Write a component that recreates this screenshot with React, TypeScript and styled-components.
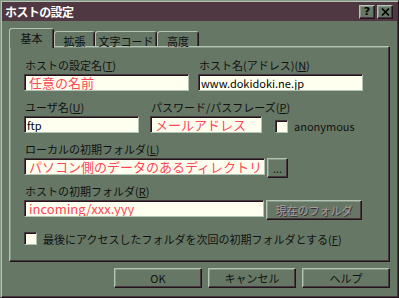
import * as React from "react";
import styled, { createGlobalStyle, css } from "styled-components";

// 色 (Win95 風のテーマ)
const C = {
  face: "#667766",
  light: "#b4c4b4",
  hi: "#889888",
  dark: "#22141a",
  shadow: "#46363e",
  ivory: "#fffff0",
  red: "#ff4656",
  title: "#4f3842",
};

const raised = css`
  border: 1px solid;
  border-color: ${C.light} ${C.dark} ${C.dark} ${C.light};
  box-shadow: inset -1px -1px ${C.shadow}, inset 1px 1px ${C.hi};
`;

const sunken = css`
  border: 1px solid;
  border-color: ${C.shadow} ${C.light} ${C.light} ${C.shadow};
  box-shadow: inset 1px 1px ${C.dark};
`;

const GlobalStyle = createGlobalStyle`
  html, body {
    margin: 0;
    padding: 0;
    background: ${C.face};
  }
  body {
    font-family: "Noto Sans CJK JP", "Noto Sans", sans-serif;
    font-size: 11px;
    color: #111;
  }
`;

const Window = styled.div`
  width: 399px;
  height: 298px;
  box-sizing: border-box;
  background: ${C.face};
  border: 1px solid;
  border-color: ${C.hi} ${C.dark} ${C.dark} ${C.hi};
  box-shadow: inset 1px 1px ${C.light}, inset -1px -1px ${C.shadow};
  display: flex;
  flex-direction: column;
`;

const TitleBar = styled.div`
  margin: 1px 1px 0 1px;
  height: 19px;
  background: ${C.title};
  display: flex;
  align-items: center;
  justify-content: space-between;
  padding: 0 4px 0 3px;
`;

const Title = styled.span`
  color: #fff;
  font-size: 12px;
  font-weight: 700;
  letter-spacing: -0.6px;
  line-height: 14px;
`;

const CapButtons = styled.div`
  display: flex;
  gap: 2px;
`;

const CapButton = styled.div`
  width: 16px;
  height: 14px;
  box-sizing: border-box;
  ${raised};
  background: ${C.face};
  display: flex;
  align-items: center;
  justify-content: center;
  font-family: "DejaVu Sans", sans-serif;
  font-weight: 700;
  font-size: 11px;
  line-height: 12px;
  color: #000;
`;

const Body = styled.div`
  flex: 1;
  padding: 7px 8px 0 8px;
  display: flex;
  flex-direction: column;
`;

const Tabs = styled.div`
  display: flex;
  align-items: flex-end;
  height: 18px;
`;

const Tab = styled.div<{ $active?: boolean; $w: number }>`
  width: ${(p) => p.$w}px;
  height: ${(p) => (p.$active ? 20 : 15)}px;
  margin-bottom: ${(p) => (p.$active ? -2 : 0)}px;
  box-sizing: border-box;
  background: ${C.face};
  border: 1px solid;
  border-bottom: none;
  border-color: ${C.light} ${C.dark} transparent ${C.light};
  border-radius: 3px 3px 0 0;
  box-shadow: inset -1px 0 ${C.shadow};
  display: flex;
  justify-content: center;
  padding-top: 2px;
  font-size: 11px;
  line-height: 14px;
  white-space: nowrap;
  position: relative;
  z-index: ${(p) => (p.$active ? 1 : 0)};
`;

const Panel = styled.div`
  height: 216px;
  box-sizing: border-box;
  ${raised};
  padding: 11px 14px 0 14px;
  display: flex;
  flex-direction: column;
`;

const Row = styled.div<{ $top?: number }>`
  display: flex;
  align-items: flex-start;
  margin-top: ${(p) => p.$top ?? 0}px;
`;

const Field = styled.div<{ $w: number; $left?: number }>`
  width: ${(p) => p.$w}px;
  display: flex;
  flex-direction: column;
  gap: 2px;
  flex: none;
  margin-left: ${(p) => p.$left ?? 0}px;
`;

const Label = styled.span`
  height: 14px;
  line-height: 14px;
  font-size: 11px;
  padding-left: 1px;
  white-space: nowrap;

  u {
    text-decoration: underline;
    text-underline-offset: 1px;
  }
`;

const TextBox = styled.input<{ $w?: number; $sample?: boolean }>`
  width: ${(p) => (p.$w ? `${p.$w}px` : "100%")};
  height: 17px;
  box-sizing: border-box;
  margin: 0;
  padding: 0 0 0 ${(p) => (p.$sample ? 4 : 2)}px;
  ${sunken};
  background: ${C.ivory};
  outline: none;
  font-family: "Noto Sans CJK JP", "Noto Sans", sans-serif;
  font-size: ${(p) => (p.$sample ? 13 : 11)}px;
  font-weight: 400;
  color: ${(p) => (p.$sample ? C.red : "#000")};
  line-height: 15px;
`;

const InputLine = styled.div`
  display: flex;
  align-items: flex-start;
  gap: 2px;
`;

const Button = styled.button<{ $w: number; $disabled?: boolean }>`
  width: ${(p) => p.$w}px;
  height: 20px;
  flex: none;
  box-sizing: border-box;
  margin: 0;
  padding: 0;
  ${raised};
  background: ${C.face};
  font-family: "Noto Sans CJK JP", "Noto Sans", sans-serif;
  font-size: 11px;
  line-height: 14px;
  color: ${(p) => (p.$disabled ? "#a89c9e" : "#111")};
  text-shadow: ${(p) => (p.$disabled ? `1px 1px 0 #3c2e34` : "none")};
`;

const Check = styled.span<{ $top?: number; $left?: number }>`
  width: 13px;
  height: 13px;
  box-sizing: border-box;
  ${sunken};
  background: ${C.ivory};
  flex: none;
  margin-top: ${(p) => p.$top ?? 0}px;
  margin-left: ${(p) => p.$left ?? 0}px;
`;

const CheckLabel = styled.span<{ $top?: number }>`
  margin-left: 6px;
  margin-top: ${(p) => p.$top ?? 0}px;
  font-size: 11px;
  line-height: 14px;
  white-space: nowrap;
`;

const Footer = styled.div`
  display: flex;
  justify-content: flex-end;
  gap: 6px;
  margin-top: 6px;
`;

const CloseIcon = () => (
  <svg width="9" height="8" viewBox="0 0 9 8">
    <path d="M1 0.5 L8 7.5 M8 0.5 L1 7.5" stroke="#000" strokeWidth="1.6" />
  </svg>
);

export default function App() {
  return (
    <>
      <GlobalStyle />
      <Window>
        <TitleBar>
          <Title>ホストの設定</Title>
          <CapButtons>
            <CapButton>?</CapButton>
            <CapButton>
              <CloseIcon />
            </CapButton>
          </CapButtons>
        </TitleBar>
        <Body>
          <Tabs>
            <Tab $active $w={45}>基本</Tab>
            <Tab $w={41}>拡張</Tab>
            <Tab $w={62}>文字コード</Tab>
            <Tab $w={42}>高度</Tab>
          </Tabs>
          <Panel>
            <Row>
              <Field $w={165}>
                <Label>
                  ホストの設定名(<u>T</u>)
                </Label>
                <TextBox $sample readOnly value="任意の名前" />
              </Field>
              <Field $w={165} $left={9}>
                <Label>
                  ホスト名(アドレス)(<u>N</u>)
                </Label>
                <TextBox readOnly value="www.dokidoki.ne.jp" />
              </Field>
            </Row>
            <Row $top={9}>
              <Field $w={115}>
                <Label>
                  ユーザ名(<u>U</u>)
                </Label>
                <TextBox readOnly value="ftp" />
              </Field>
              <Field $w={112} $left={11}>
                <Label>
                  パスワード/パスフレーズ(<u>P</u>)
                </Label>
                <TextBox $sample readOnly value="メールアドレス" />
              </Field>
              <Check $top={20} $left={13} />
              <CheckLabel $top={19}>anonymous</CheckLabel>
            </Row>
            <Row $top={9}>
              <Field $w={264}>
                <Label>
                  ローカルの初期フォルダ(<u>L</u>)
                </Label>
                <InputLine>
                  <TextBox
                    $w={241}
                    $sample
                    readOnly
                    value="パソコン側のデータのあるディレクトリ"
                  />
                  <Button $w={21}>...</Button>
                </InputLine>
              </Field>
            </Row>
            <Row $top={6}>
              <Field $w={338}>
                <Label>
                  ホストの初期フォルダ(<u>R</u>)
                </Label>
                <InputLine>
                  <TextBox $w={240} $sample readOnly value="incoming/xxx.yyy" />
                  <Button $w={96} $disabled>
                    現在のフォルダ
                  </Button>
                </InputLine>
              </Field>
            </Row>
            <Row $top={12}>
              <Check />
              <CheckLabel>
                最後にアクセスしたフォルダを次回の初期フォルダとする(<u>F</u>)
              </CheckLabel>
            </Row>
          </Panel>
          <Footer>
            <Button $w={88}>OK</Button>
            <Button $w={88}>キャンセル</Button>
            <Button $w={88}>ヘルプ</Button>
          </Footer>
        </Body>
      </Window>
    </>
  );
}
